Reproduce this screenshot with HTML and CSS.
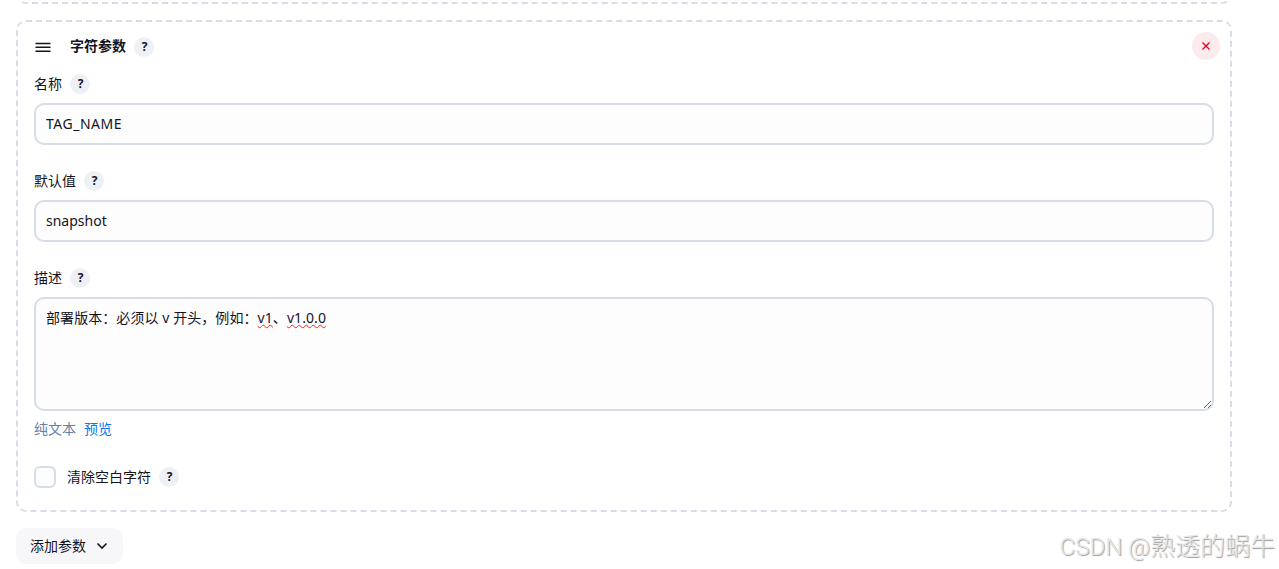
FILE: index.html
```
<!DOCTYPE html>
<html lang="zh-CN">
<head>
    <meta charset="UTF-8">
    <meta name="viewport" content="width=device-width, initial-scale=1.0">
    <title>参数配置</title>
    <link rel="stylesheet" href="styles.css">
</head>
<body>
    <div class="params">
        <div class="chunk chunk-prev"></div>
        <div class="chunk">
            <div class="chunk-header">
                <svg class="drag-handle" width="18" height="18" viewBox="0 0 18 18">
                    <path d="M1.5 6.5h15M1.5 10.2h15M1.5 14.2h15"/>
                </svg>
                <b class="chunk-title">字符参数</b>
                <span class="help">?</span>
                <button class="delete" type="button">
                    <svg width="10" height="10" viewBox="0 0 10 10">
                        <path d="M1.5 1.5l7 7M8.5 1.5l-7 7"/>
                    </svg>
                </button>
            </div>

            <div class="field">
                <div class="label">名称<span class="help">?</span></div>
                <input class="input input-name" type="text" value="TAG_NAME">
            </div>
            <div class="field">
                <div class="label">默认值<span class="help">?</span></div>
                <input class="input" type="text" value="snapshot">
            </div>
            <div class="field field-last">
                <div class="label">描述<span class="help">?</span></div>
                <div class="textarea" contenteditable="true" spellcheck="false">部署版本：必须以 v 开头，例如：<span class="typo">v1</span>、<span class="typo">v1.0.0</span></div>
                <div class="preview">
                    <span class="plain">纯文本</span>
                    <a class="link">预览</a>
                </div>
            </div>
            <div class="check">
                <span class="checkbox"></span>
                <span class="check-label">清除空白字符</span>
                <span class="help">?</span>
            </div>
        </div>

        <button class="add" type="button">
            添加参数
            <svg width="12" height="12" viewBox="0 0 12 12">
                <path d="M1.5 3.5L6 8l4.5-4.5"/>
            </svg>
        </button>
    </div>
    <div class="watermark"><span class="watermark-site">CSDN @</span>熟透的蜗牛</div>
</body>
</html>
```

FILE: styles.css
```
* {
    box-sizing: border-box;
}

body {
    margin: 0;
    height: 569px;
    overflow: hidden;
    position: relative;
    background: #fff;
    color: #14141f;
    font-family: "Noto Sans", "Noto Sans CJK SC", sans-serif;
    font-size: 14px;
    line-height: 20px;
}

.params {
    width: 1232px;
    padding-left: 16px;
}

.chunk {
    height: 492px;
    padding: 10px 16px 0;
    border: 2px dashed #d6dde8;
    border-radius: 10px;
}

.chunk-prev {
    height: 40px;
    margin-top: -36px;
    margin-bottom: 16px;
}

.chunk-header {
    display: flex;
    align-items: center;
    height: 28px;
    margin: 0 -6px 14px 0;
}

.drag-handle {
    margin-right: 18px;
    fill: none;
    stroke: #14141f;
    stroke-width: 1.5;
}

.chunk-title {
    font-weight: 700;
}

.help {
    display: flex;
    align-items: center;
    justify-content: center;
    width: 20px;
    height: 20px;
    margin-left: 8px;
    padding-left: 1px;
    border-radius: 50%;
    background: #edf1f5;
    font-family: "Open Sans", sans-serif;
    font-size: 12px;
    font-weight: 700;
}

.chunk-header .help {
    margin-top: 2px;
}

.delete {
    display: flex;
    align-items: center;
    justify-content: center;
    width: 28px;
    height: 28px;
    margin-left: auto;
    padding: 0;
    border: none;
    border-radius: 50%;
    background: #fdeaec;
}

.delete svg {
    fill: none;
    stroke: #e6001f;
    stroke-width: 1.3;
}

.field {
    margin-bottom: 26px;
}

.field-last {
    margin-bottom: 27px;
}

.label {
    display: flex;
    height: 20px;
    margin-bottom: 9px;
}

.input,
.textarea {
    display: block;
    width: 100%;
    border: 2px solid #d6dde8;
    border-radius: 10px;
    background: #fdfdfd;
    color: inherit;
    font: inherit;
    outline: none;
}

.input {
    height: 42px;
    padding: 0 10px 2px;
}

.input-name {
    letter-spacing: 0.5px;
}

.textarea {
    height: 114px;
    padding: 9px 10px;
    letter-spacing: 0.07px;
    overflow: auto;
    resize: vertical;
}

.typo {
    text-decoration: underline wavy #f22 1.3px;
    text-decoration-skip-ink: none;
    text-underline-offset: 1px;
}

.preview {
    display: flex;
    gap: 8px;
    margin-top: 8px;
}

.plain {
    color: #67809f;
}

.link {
    color: #0b76ea;
}

.check {
    display: flex;
    align-items: center;
    height: 22px;
}

.checkbox {
    width: 22px;
    height: 22px;
    margin-right: 11px;
    border: 2px solid #d6dde8;
    border-radius: 6px;
    background: #fdfdfd;
}

.add {
    display: flex;
    align-items: center;
    gap: 10px;
    width: 107px;
    height: 36px;
    margin-top: 16px;
    padding: 0 0 0 14px;
    border: none;
    border-radius: 10px;
    background: #f7f7fa;
    color: inherit;
    font: inherit;
}

.add svg {
    fill: none;
    stroke: #14141f;
    stroke-width: 1.6;
}

.watermark {
    position: absolute;
    right: 4px;
    bottom: 4px;
    color: #e6e6e6;
    font-family: "Noto Sans CJK SC", sans-serif;
    font-size: 25px;
    font-weight: 300;
    line-height: 36px;
    text-shadow: 1px 1px 1px #999;
    white-space: nowrap;
}

.watermark-site {
    font-family: Roboto, sans-serif;
    font-size: 24px;
}
```
